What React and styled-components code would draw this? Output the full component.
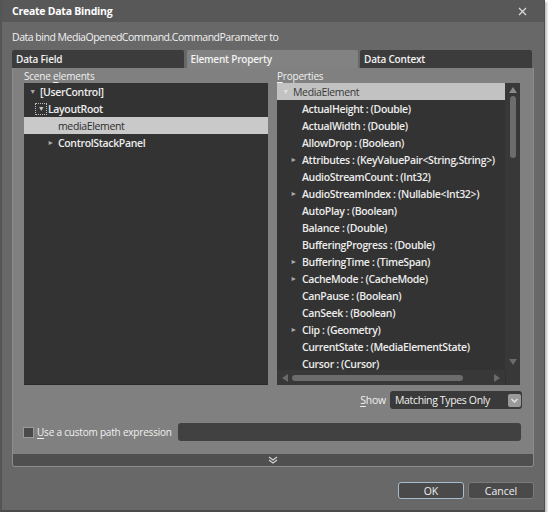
import React from 'react'
import styled, { createGlobalStyle, css } from 'styled-components'

const GlobalStyle = createGlobalStyle`
  html, body {
    margin: 0;
    padding: 0;
    background: #ffffff;
  }
  body {
    font-family: "Open Sans", "Noto Sans", sans-serif;
  }
`

const sceneItems = [
  { label: '[UserControl]', level: 0, arrow: 'down' },
  { label: 'LayoutRoot', level: 1, arrow: 'down', focus: true },
  { label: 'mediaElement', level: 2, selected: true },
  { label: 'ControlStackPanel', level: 2, arrow: 'right' },
]

const properties = [
  { label: 'ActualHeight : (Double)' },
  { label: 'ActualWidth : (Double)' },
  { label: 'AllowDrop : (Boolean)' },
  { label: 'Attributes : (KeyValuePair<String,String>)', arrow: true },
  { label: 'AudioStreamCount : (Int32)' },
  { label: 'AudioStreamIndex : (Nullable<Int32>)', arrow: true },
  { label: 'AutoPlay : (Boolean)' },
  { label: 'Balance : (Double)' },
  { label: 'BufferingProgress : (Double)' },
  { label: 'BufferingTime : (TimeSpan)', arrow: true },
  { label: 'CacheMode : (CacheMode)', arrow: true },
  { label: 'CanPause : (Boolean)' },
  { label: 'CanSeek : (Boolean)' },
  { label: 'Clip : (Geometry)', arrow: true },
  { label: 'CurrentState : (MediaElementState)' },
  { label: 'Cursor : (Cursor)' },
]

const Window = styled.div`
  width: 545px;
  height: 512px;
  box-sizing: border-box;
  background: #686868;
  border-left: 2px solid #555;
  border-right: 1px solid #4e4e4e;
  border-bottom: 2px solid #4a4a4a;
  box-shadow: 2px 2px 2px rgba(0, 0, 0, 0.25);
  display: flex;
  flex-direction: column;
  color: #f0f0f0;
`

const TitleBar = styled.div`
  height: 22px;
  flex-shrink: 0;
  background: #585858;
  display: flex;
  align-items: center;
  justify-content: space-between;
  padding: 0 17px 0 10px;
`

const Title = styled.div`
  font-size: 10.5px;
  font-weight: 700;
  color: #ffffff;
  letter-spacing: -0.25px;
`

const Body = styled.div`
  flex: 1;
  display: flex;
  flex-direction: column;
  padding: 0 10px 0 10px;
`

const Caption = styled.div`
  font-size: 10.5px;
  height: 28px;
  line-height: 31px;
  color: #f2f2f2;
  letter-spacing: -0.48px;
`

const Tabs = styled.div`
  display: grid;
  grid-template-columns: 172px 171px 172px;
  column-gap: 2.5px;
  height: 18px;
`

const Tab = styled.div`
  font-size: 10px;
  font-weight: 600;
  padding: 0 0 0 4px;
  line-height: 19px;
  letter-spacing: -0.2px;
  color: #f2f2f2;
  background: #3c3c3c;
  border-radius: 2px 2px 0 0;
  ${({ active }) => active && css`
    background: #828282;
  `}
`

const Panel = styled.div`
  background: #808080;
  border: 1px solid #8c8c8c;
  border-top: none;
  border-radius: 0 0 3px 3px;
  display: flex;
  flex-direction: column;
  height: 399px;
  box-sizing: border-box;
`

const Columns = styled.div`
  display: grid;
  grid-template-columns: 244px 243px;
  column-gap: 9px;
  padding: 0 11px 0 11px;
`

const Column = styled.div`
  display: flex;
  flex-direction: column;
`

const Label = styled.div`
  font-size: 10px;
  height: 15px;
  line-height: 17px;
  color: #f0f0f0;
  letter-spacing: -0.2px;
`

const Key = styled.span`
  text-decoration: underline;
  text-underline-offset: 2px;
`

const ListBox = styled.div`
  height: 302px;
  background: #333333;
  display: grid;
  grid-template-columns: ${({ scroll }) => (scroll ? '1fr 15px' : '1fr')};
  grid-template-rows: ${({ scroll }) => (scroll ? '1fr 15px' : '1fr')};
  box-shadow: inset 0 -1px 0 #2a2a2a;
  overflow: hidden;
`

const Rows = styled.div`
  display: flex;
  flex-direction: column;
  overflow: hidden;
`

const Row = styled.div`
  height: 17px;
  flex-shrink: 0;
  display: flex;
  align-items: center;
  padding-left: ${({ indent }) => indent}px;
  font-size: 10.5px;
  font-weight: 600;
  letter-spacing: -0.35px;
  color: #ececec;
  white-space: nowrap;
  ${({ selected }) => selected && css`
    background: #c9c9c9;
    color: #2e2e2e;
    font-weight: 400;
  `}
  ${({ header }) => header && css`
    background: #c2c2c2;
    color: #383838;
    font-weight: 400;
  `}
`

const Arrow = styled.span`
  width: 9px;
  flex-shrink: 0;
  font-size: 7px;
  color: ${({ light }) => (light ? '#e0e0e0' : '#a8a8a8')};
  display: flex;
  align-items: center;
  justify-content: center;
  margin-right: ${({ gap }) => gap || 0}px;
`

const FocusBox = styled.span`
  width: 12px;
  height: 12px;
  box-sizing: border-box;
  border: 1px dotted #bcbcbc;
  display: flex;
  align-items: center;
  justify-content: center;
  font-size: 7px;
  color: #c8c8c8;
  margin: 0 1px 0 -2px;
`

const VScroll = styled.div`
  background: #383838;
  display: flex;
  flex-direction: column;
  align-items: center;
  padding-top: 4px;
`

const VThumb = styled.div`
  width: 6px;
  height: 62px;
  border-radius: 3px;
  background: #6c6c6c;
  margin-top: 3px;
`

const HScroll = styled.div`
  background: #383838;
  display: flex;
  align-items: center;
  padding: 0 5px;
`

const HThumb = styled.div`
  width: 171px;
  height: 6px;
  border-radius: 3px;
  background: #6c6c6c;
  margin-left: 4px;
`

const Corner = styled.div`
  background: #383838;
  border-left: 1px solid #303030;
`

const Spacer = styled.div`
  flex: 1;
`

const ShowRow = styled.div`
  display: flex;
  justify-content: flex-end;
  align-items: center;
  gap: 4px;
  padding: 6px 11px 0 0;
  height: 18px;
`

const ShowLabel = styled.span`
  font-size: 10.5px;
  letter-spacing: -0.2px;
  color: #f0f0f0;
`

const Select = styled.div`
  width: 132px;
  height: 18px;
  box-sizing: border-box;
  background: #3a3a3a;
  border-radius: 3px;
  display: flex;
  align-items: center;
  justify-content: space-between;
  padding: 0 1px 0 5px;
  font-size: 10.5px;
  letter-spacing: -0.35px;
  color: #f0f0f0;
`

const SelectButton = styled.span`
  width: 13px;
  height: 13px;
  background: #9a9a9a;
  border-radius: 2px;
  display: flex;
  align-items: center;
  justify-content: center;
`

const PathRow = styled.div`
  display: flex;
  align-items: center;
  padding: 14px 12px 0 10px;
  height: 18px;
`

const Checkbox = styled.span`
  width: 11px;
  height: 11px;
  box-sizing: border-box;
  border: 1px solid #9a9a9a;
  background: #4a4a4a;
  margin-right: 3px;
`

const PathLabel = styled.span`
  font-size: 10px;
  letter-spacing: -0.2px;
  color: #f0f0f0;
  margin-right: 6px;
`

const PathInput = styled.div`
  flex: 1;
  height: 18px;
  background: #414141;
  border-radius: 3px;
`

const Expander = styled.div`
  height: 12px;
  background: #4f4f4f;
  display: flex;
  align-items: center;
  justify-content: center;
  border-radius: 0 0 2px 2px;
`

const Footer = styled.div`
  display: flex;
  justify-content: flex-end;
  gap: 4px;
  padding: 15px 0 0 0;
`

const Button = styled.button`
  width: ${({ w }) => w}px;
  height: 17px;
  box-sizing: border-box;
  background: #4a4a4a;
  border: 1px solid #7a7a7a;
  border-radius: 3px;
  color: #f0f0f0;
  font-family: "Open Sans", sans-serif;
  font-size: 10.5px;
  font-weight: 500;
  padding: 0;
  line-height: 14px;
  ${({ focused }) => focused && css`
    border-color: #a9bccb;
  `}
`

const Chevron = ({ color = '#e6e6e6' }) => (
  <svg width="7" height="5" viewBox="0 0 7 5">
    <path d="M0.5 1 L3.5 4 L6.5 1" fill="none" stroke={color} strokeWidth="1.4" />
  </svg>
)

const CloseIcon = () => (
  <svg width="9" height="9" viewBox="0 0 9 9">
    <path d="M1 1 L8 8 M8 1 L1 8" stroke="#d8d8d8" strokeWidth="1.3" />
  </svg>
)

const Tri = ({ dir, color = '#8a8a8a' }) => {
  const d = {
    up: 'M0 6 L4 0 L8 6 Z',
    down: 'M0 0 L8 0 L4 6 Z',
    left: 'M6 0 L6 8 L0 4 Z',
    right: 'M0 0 L0 8 L6 4 Z',
  }[dir]
  const vertical = dir === 'up' || dir === 'down'
  return (
    <svg width={vertical ? 8 : 6} height={vertical ? 6 : 8} viewBox={vertical ? '0 0 8 6' : '0 0 6 8'}>
      <path d={d} fill={color} />
    </svg>
  )
}

const DoubleChevron = () => (
  <svg width="10" height="8" viewBox="0 0 10 8">
    <path d="M1 1 L5 4 L9 1 M1 4 L5 7 L9 4" fill="none" stroke="#d0d0d0" strokeWidth="1.3" />
  </svg>
)

const SceneTree = () => (
  <ListBox>
    <Rows>
      {sceneItems.map(item => (
        <Row key={item.label} indent={4 + item.level * 9} selected={item.selected}>
          {item.focus
            ? <FocusBox>▼</FocusBox>
            : <Arrow gap={3}>{item.arrow === 'down' ? '▼' : item.arrow === 'right' ? '►' : ''}</Arrow>}
          {item.label}
        </Row>
      ))}
    </Rows>
  </ListBox>
)

const PropertyList = () => (
  <ListBox scroll>
    <Rows>
      <Row header indent={4}>
        <Arrow light gap={3}>▼</Arrow>
        MediaElement
      </Row>
      {properties.map(p => (
        <Row key={p.label} indent={12}>
          <Arrow gap={4}>{p.arrow ? '►' : ''}</Arrow>
          {p.label}
        </Row>
      ))}
    </Rows>
    <VScroll>
      <Tri dir="up" />
      <VThumb />
      <Spacer />
      <Tri dir="down" color="#6a6a6a" />
      <div style={{ height: 5 }} />
    </VScroll>
    <HScroll>
      <Tri dir="left" color="#6a6a6a" />
      <HThumb />
      <Spacer />
      <Tri dir="right" color="#6a6a6a" />
    </HScroll>
    <Corner />
  </ListBox>
)

export default function App() {
  return (
    <>
      <GlobalStyle />
      <Window>
        <TitleBar>
          <Title>Create Data Binding</Title>
          <CloseIcon />
        </TitleBar>
        <Body>
          <Caption>Data bind MediaOpenedCommand.CommandParameter to</Caption>
          <Tabs>
            <Tab>Data Field</Tab>
            <Tab active>Element Property</Tab>
            <Tab>Data Context</Tab>
          </Tabs>
          <Panel>
            <Columns>
              <Column>
                <Label>Scene <Key>e</Key>lements</Label>
                <SceneTree />
              </Column>
              <Column>
                <Label><Key>P</Key>roperties</Label>
                <PropertyList />
              </Column>
            </Columns>
            <ShowRow>
              <ShowLabel><Key>S</Key>how</ShowLabel>
              <Select>
                Matching Types Only
                <SelectButton><Chevron /></SelectButton>
              </Select>
            </ShowRow>
            <PathRow>
              <Checkbox />
              <PathLabel><Key>U</Key>se a custom path expression</PathLabel>
              <PathInput />
            </PathRow>
            <Spacer />
            <Expander><DoubleChevron /></Expander>
          </Panel>
          <Footer>
            <Button w={66} focused>OK</Button>
            <Button w={66}>Cancel</Button>
          </Footer>
        </Body>
      </Window>
    </>
  )
}
